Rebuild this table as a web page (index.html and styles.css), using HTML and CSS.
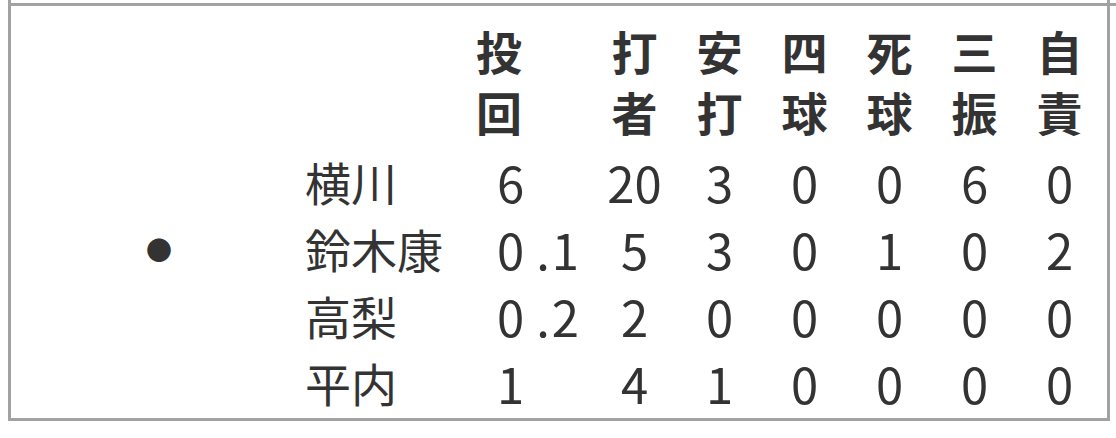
FILE: index.html
```html
<!DOCTYPE html>
<html lang="ja">
<head>
<meta charset="utf-8">
<title>投手成績</title>
<link rel="stylesheet" href="styles.css">
</head>
<body>
<div class="frame">
  <div class="topline"></div>
  <div class="stats">
    <div class="row head">
      <span class="mark"></span>
      <span class="name"></span>
      <span class="ip">投<br>回</span>
      <span class="num">打<br>者</span>
      <span class="num">安<br>打</span>
      <span class="num">四<br>球</span>
      <span class="num">死<br>球</span>
      <span class="num">三<br>振</span>
      <span class="num">自<br>責</span>
    </div>
    <div class="row">
      <span class="mark"></span>
      <span class="name">横川</span>
      <span class="ip">6</span>
      <span class="num">20</span>
      <span class="num">3</span>
      <span class="num">0</span>
      <span class="num">0</span>
      <span class="num">6</span>
      <span class="num">0</span>
    </div>
    <div class="row">
      <span class="mark"><span class="dot">●</span></span>
      <span class="name">鈴木康</span>
      <span class="ip">0<span class="pt">.</span>1</span>
      <span class="num">5</span>
      <span class="num">3</span>
      <span class="num">0</span>
      <span class="num">1</span>
      <span class="num">0</span>
      <span class="num">2</span>
    </div>
    <div class="row">
      <span class="mark"></span>
      <span class="name">高梨</span>
      <span class="ip">0<span class="pt">.</span>2</span>
      <span class="num">2</span>
      <span class="num">0</span>
      <span class="num">0</span>
      <span class="num">0</span>
      <span class="num">0</span>
      <span class="num">0</span>
    </div>
    <div class="row">
      <span class="mark"></span>
      <span class="name">平内</span>
      <span class="ip">1</span>
      <span class="num">4</span>
      <span class="num">1</span>
      <span class="num">0</span>
      <span class="num">0</span>
      <span class="num">0</span>
      <span class="num">0</span>
    </div>
  </div>
</div>
</body>
</html>
```
FILE: styles.css
```css
html, body {
  margin: 0;
  padding: 0;
  background: #ffffff;
}

body {
  font-family: "Noto Sans CJK JP", "Noto Sans", sans-serif;
  color: #333333;
  width: 1116px;
  height: 438px;
  overflow: hidden;
}

.frame {
  box-sizing: border-box;
  margin-left: 8px;
  width: 1102px;
  height: 421px;
  padding-top: 3px;
  border-left: 3px solid #a2a2a2;
  border-right: 3px solid #a2a2a2;
  border-bottom: 3px solid #a2a2a2;
}

.topline {
  height: 3px;
  background: #a2a2a2;
  margin-right: -9px;
  position: relative;
}

.stats {
  padding-top: 14px;
  display: flex;
  flex-direction: column;
}

.row {
  display: grid;
  grid-template-columns: 294px 165px 122px repeat(6, 85px);
  align-items: center;
  font-size: 46px;
  line-height: 67px;
  height: 67px;
  font-weight: 400;
}

.row.head {
  font-weight: 700;
  line-height: 61px;
  height: 122px;
  margin-bottom: 6px;
}

.mark {
  padding-left: 135px;
  display: flex;
  align-items: center;
}

.dot {
  font-family: "Noto Sans CJK JP", sans-serif;
  font-size: 26px;
  line-height: 1;
}

.name {
  white-space: nowrap;
}

.ip {
  padding-left: 27px;
  white-space: nowrap;
  font-size: 49px;
}

.num {
  text-align: center;
  font-size: 49px;
}

.head .ip,
.head .num {
  font-size: 46px;
}

.head .ip {
  padding-left: 6px;
}

.pt {
  margin-left: 12px;
  margin-right: 2px;
}
```
